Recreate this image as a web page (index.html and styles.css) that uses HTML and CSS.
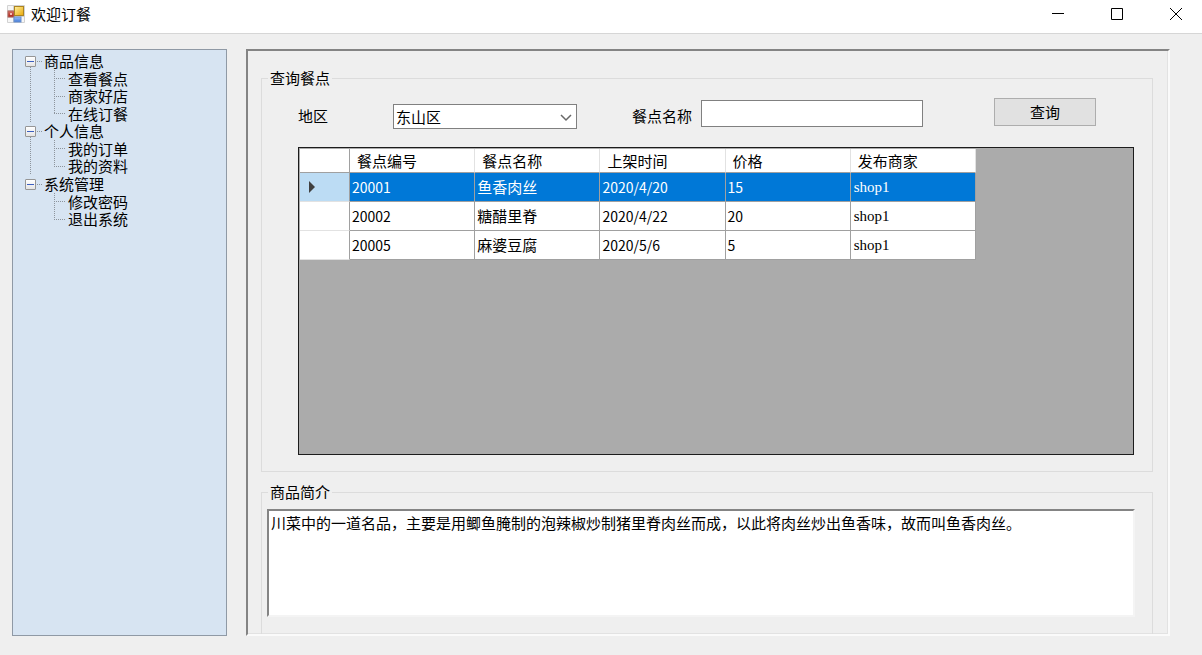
FILE: index.html
```html
<!DOCTYPE html>
<html lang="zh-CN">
<head>
<meta charset="utf-8">
<title>欢迎订餐</title>
<link rel="stylesheet" href="styles.css">
</head>
<body>
<header class="titlebar">
  <svg class="app-icon" width="18" height="18" viewBox="0 0 18 18" aria-hidden="true">
    <defs>
      <linearGradient id="gold" x1="0" y1="0" x2="1" y2="1"><stop offset="0" stop-color="#fff0a0"/><stop offset="1" stop-color="#eaa908"/></linearGradient>
      <linearGradient id="blue" x1="0" y1="0" x2="0" y2="1"><stop offset="0" stop-color="#9cc0f8"/><stop offset="1" stop-color="#3f78d8"/></linearGradient>
      <linearGradient id="red" x1="0" y1="0" x2="0" y2="1"><stop offset="0" stop-color="#dc7468"/><stop offset="1" stop-color="#a81c14"/></linearGradient>
    </defs>
    <rect x="0" y="0" width="18" height="18" rx="1" fill="#d2d2d2"/>
    <path d="M1 1h5v4H1zM1 13h5v4H1zM14 12h3v5h-3z" fill="#f6f6f6"/>
    <rect x="1" y="6" width="6" height="6" fill="url(#red)" stroke="#b0645c" stroke-width="1"/>
    <rect x="3" y="8" width="2" height="2" fill="#f4c0b8"/>
    <rect x="7.500" y="1.500" width="9" height="9" fill="url(#gold)" stroke="#ac8420"/>
    <rect x="7" y="12" width="7" height="5" fill="url(#blue)" stroke="#6a90cc" stroke-width="1"/>
  </svg>
  <h1 class="title">欢迎订餐</h1>
  <div class="window-buttons">
    <button type="button" aria-label="最小化"><svg width="12" height="12" viewBox="0 0 12 12"><path d="M0 5.500h12"/></svg></button>
    <button type="button" aria-label="最大化"><svg width="12" height="12" viewBox="0 0 12 12"><path d="M.5.500h11v11H.5z"/></svg></button>
    <button type="button" aria-label="关闭"><svg width="12" height="12" viewBox="0 0 12 12"><path d="M0 0l12 12M12 0L0 12"/></svg></button>
  </div>
</header>
<div class="workspace">
  <nav class="sidebar" aria-label="功能菜单">
    <ul class="tree">
      <li class="branch">
        <div class="branch-head"><button type="button" class="toggle" aria-label="折叠商品信息" aria-expanded="true"></button><span>商品信息</span></div>
        <ul class="leaves">
          <li><a href="#meals">查看餐点</a></li>
          <li><a href="#shops">商家好店</a></li>
          <li><a href="#order">在线订餐</a></li>
        </ul>
      </li>
      <li class="branch">
        <div class="branch-head"><button type="button" class="toggle" aria-label="折叠个人信息" aria-expanded="true"></button><span>个人信息</span></div>
        <ul class="leaves">
          <li><a href="#my-orders">我的订单</a></li>
          <li><a href="#profile">我的资料</a></li>
        </ul>
      </li>
      <li class="branch">
        <div class="branch-head"><button type="button" class="toggle" aria-label="折叠系统管理" aria-expanded="true"></button><span>系统管理</span></div>
        <ul class="leaves">
          <li><a href="#password">修改密码</a></li>
          <li><a href="#exit">退出系统</a></li>
        </ul>
      </li>
    </ul>
  </nav>
  <main class="panel">
    <fieldset class="group group-query" id="meals">
      <legend>查询餐点</legend>
      <div class="query-body">
        <form class="filters">
          <label for="area">地区</label>
          <div class="combo">
            <select id="area"><option>东山区</option></select>
            <svg class="chevron" width="12" height="8" viewBox="0 0 12 8" aria-hidden="true"><path d="M1 1l5 5 5-5"/></svg>
          </div>
          <label class="name-label" for="meal-name">餐点名称</label>
          <input class="name-input" id="meal-name" type="text">
          <button class="search" type="button">查询</button>
        </form>
        <div class="grid-box">
          <table class="grid">
            <colgroup><col class="col-marker"><col span="5"></colgroup>
            <thead>
              <tr><th></th><th>餐点编号</th><th>餐点名称</th><th>上架时间</th><th>价格</th><th>发布商家</th></tr>
            </thead>
            <tbody>
              <tr class="selected"><th><svg width="8" height="12" viewBox="0 0 8 12" aria-hidden="true"><path d="M1 0l6 6-6 6z"/></svg></th><td>20001</td><td class="meal">鱼香肉丝</td><td>2020/4/20</td><td>15</td><td class="shop">shop1</td></tr>
              <tr><th></th><td>20002</td><td class="meal">糖醋里脊</td><td>2020/4/22</td><td>20</td><td class="shop">shop1</td></tr>
              <tr><th></th><td>20005</td><td class="meal">麻婆豆腐</td><td>2020/5/6</td><td>5</td><td class="shop">shop1</td></tr>
            </tbody>
          </table>
        </div>
      </div>
    </fieldset>
    <fieldset class="group group-intro">
      <legend id="intro-title">商品简介</legend>
      <div class="intro-body">
        <textarea class="intro" aria-labelledby="intro-title" spellcheck="false">川菜中的一道名品，主要是用鲫鱼腌制的泡辣椒炒制猪里脊肉丝而成，以此将肉丝炒出鱼香味，故而叫鱼香肉丝。</textarea>
      </div>
    </fieldset>
  </main>
</div>
</body>
</html>
```

FILE: styles.css
```css
* {
  box-sizing: border-box;
}

body {
  margin: 0;
  min-height: 100vh;
  display: flex;
  flex-direction: column;
  background: #efefef;
  color: #000;
  font: 15px/18px "Noto Sans CJK SC", sans-serif;
}

button,
input,
select,
textarea {
  margin: 0;
  border-radius: 0;
  color: inherit;
  font: inherit;
}

ul {
  margin: 0;
  padding: 0;
  list-style: none;
}

/* Title bar */
.titlebar {
  display: flex;
  align-items: center;
  height: 34px;
  padding: 0 4px 6px 7px;
  border-bottom: 1px solid #d6d6d6;
  background: #fff;
}

.title {
  margin: 0 0 0 6px;
  font-size: 15px;
  font-weight: 400;
}

.window-buttons {
  display: flex;
  gap: 15px;
  margin-left: auto;
}

.window-buttons button {
  display: grid;
  place-items: center;
  width: 44px;
  height: 27px;
  padding: 0;
  border: 0;
  background: none;
}

.window-buttons path {
  fill: none;
  stroke: #000;
}

/* Layout */
.workspace {
  flex: 1;
  display: flex;
  gap: 19px;
  padding: 15px 32px 19px 12px;
}

/* Tree */
.sidebar {
  flex: 0 0 215px;
  padding: 2px 11px;
  border: 1px solid #8f99a5;
  background: #d7e4f2;
  line-height: 16px;
}

.branch:not(:last-child) {
  background: repeating-linear-gradient(#8d949c 0 1px, transparent 1px 2px) 6px 9px / 1px 100% no-repeat;
}

.branch-head {
  display: flex;
  align-items: center;
  height: 18px;
}

.branch-head::after {
  content: "";
  order: 1;
  width: 5px;
  margin: 0 2px 0 1px;
  border-top: 1px dotted #8d949c;
}

.branch-head span {
  order: 2;
}

.toggle {
  display: grid;
  place-items: center;
  width: 11px;
  height: 11px;
  margin-left: 1px;
  padding: 0;
  border: 1px solid #969696;
  border-radius: 1px;
  background: linear-gradient(#fff, #e4e4e4);
}

.toggle::before {
  content: "";
  width: 7px;
  height: 1px;
  background: #3c5fc0;
}

.leaves {
  margin-left: 30px;
  background: repeating-linear-gradient(#8d949c 0 1px, transparent 1px 2px) 0 0 / 1px calc(100% - 9px) no-repeat;
}

.leaves li {
  display: flex;
  align-items: center;
  height: 17px;
}

.leaves li:nth-child(2) {
  height: 18px;
}

.leaves li::before {
  content: "";
  width: 11px;
  margin-right: 3px;
  border-top: 1px dotted #8d949c;
}

.leaves a {
  color: inherit;
  text-decoration: none;
}

/* Main panel */
.panel {
  flex: 1;
  min-width: 0;
  display: flex;
  flex-direction: column;
  gap: 11px;
  padding: 18px 15px 0 13px;
  border: 2px solid;
  border-color: #848484 #fafafa #fafafa #848484;
  box-shadow: inset -1px -1px #e2e2e2;
}

.group {
  min-width: 0;
  margin: 0;
  padding: 0;
  border: 1px solid #dcdcdc;
}

.group legend {
  margin-left: 6px;
  padding: 0 2px;
}

.group-query {
  flex: 1;
  display: flex;
  flex-direction: column;
}

.query-body {
  flex: 1;
  display: flex;
  flex-direction: column;
  gap: 18px;
  padding: 11px 18px 16px 36px;
}

.filters {
  display: flex;
  align-items: center;
  height: 31px;
}

.filters label {
  padding-top: 4px;
}

.combo {
  position: relative;
  align-self: flex-end;
  width: 184px;
  margin: 0 55px 0 65px;
}

.combo select {
  appearance: none;
  display: block;
  width: 100%;
  height: 25px;
  padding: 0 20px 0 2px;
  border: 1px solid #808080;
  background: #fff;
}

.chevron {
  position: absolute;
  right: 5px;
  top: 10px;
  pointer-events: none;
}

.chevron path {
  fill: none;
  stroke: #686868;
  stroke-width: 1.5;
}

.name-input {
  width: 222px;
  height: 27px;
  margin: 0 71px 0 9px;
  padding: 0 3px;
  border: 1px solid #808080;
  background: #fff;
}

.search {
  align-self: flex-start;
  width: 102px;
  height: 28px;
  padding: 0;
  border: 1px solid #adadad;
  background: #e1e1e1;
}

/* Data grid */
.grid-box {
  flex: 1;
  padding: 1px;
  border: 1px solid #1c1c1c;
  background: #ababab;
}

.grid {
  width: 676px;
  table-layout: fixed;
  border-collapse: separate;
  border-spacing: 0;
  background: #fff;
}

.col-marker {
  width: 50px;
}

.grid th,
.grid td {
  height: 29px;
  padding: 0 2px;
  border: solid #a0a0a0;
  border-width: 0 1px 1px 0;
  font-weight: 400;
  text-align: left;
  white-space: nowrap;
}

.grid td {
  font-size: 14px;
}

.grid .meal {
  font-size: 15px;
}

.grid .shop {
  padding-left: 3px;
  font-family: "Liberation Serif", serif;
  font-size: 15px;
}

.grid thead th {
  height: 24px;
  padding: 0 7px;
  border-right-color: #e2e2e2;
}

.grid tbody th {
  padding: 0 8px;
  border-bottom-color: #e2e2e2;
}

.grid tr th:first-child {
  border-right-color: #a0a0a0;
}

.grid th svg {
  display: block;
  fill: #404040;
}

.grid .selected td {
  background: #0078d7;
  color: #fff;
}

.grid .selected th {
  background: #bcdcf4;
}

/* Description */
.group-intro {
  border-bottom: 0;
}

.intro-body {
  padding: 8px 17px 17px 5px;
}

.intro {
  display: block;
  width: 100%;
  height: 108px;
  padding: 3px 2px;
  border: 2px solid;
  border-color: #848484 #f4f4f4 #f4f4f4 #848484;
  outline: 0;
  background: #fff;
  resize: none;
}
```
